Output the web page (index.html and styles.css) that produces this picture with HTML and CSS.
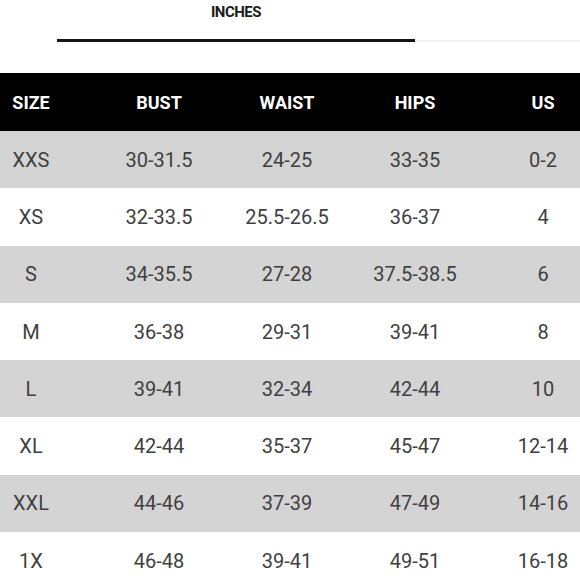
FILE: index.html
```html
<!DOCTYPE html>
<html lang="en">
<head>
<meta charset="utf-8">
<title>Size chart</title>
<link rel="stylesheet" href="styles.css">
</head>
<body>
<div class="page">
  <div class="tabs">
    <div class="tab active">INCHES</div>
    <div class="tab-rest"></div>
  </div>
  <div class="table-wrap">
    <table class="chart">
      <colgroup>
        <col class="c-size"><col class="c-m"><col class="c-m"><col class="c-m"><col class="c-m">
      </colgroup>
      <thead>
        <tr><th>SIZE</th><th>BUST</th><th>WAIST</th><th>HIPS</th><th>US</th></tr>
      </thead>
      <tbody>
        <tr class="alt"><td>XXS</td><td>30-31.5</td><td>24-25</td><td>33-35</td><td>0-2</td></tr>
        <tr><td>XS</td><td>32-33.5</td><td>25.5-26.5</td><td>36-37</td><td>4</td></tr>
        <tr class="alt"><td>S</td><td>34-35.5</td><td>27-28</td><td>37.5-38.5</td><td>6</td></tr>
        <tr><td>M</td><td>36-38</td><td>29-31</td><td>39-41</td><td>8</td></tr>
        <tr class="alt"><td>L</td><td>39-41</td><td>32-34</td><td>42-44</td><td>10</td></tr>
        <tr><td>XL</td><td>42-44</td><td>35-37</td><td>45-47</td><td>12-14</td></tr>
        <tr class="alt"><td>XXL</td><td>44-46</td><td>37-39</td><td>47-49</td><td>14-16</td></tr>
        <tr><td>1X</td><td>46-48</td><td>39-41</td><td>49-51</td><td>16-18</td></tr>
      </tbody>
    </table>
  </div>
</div>
</body>
</html>
```

FILE: styles.css
```css
html, body {
  margin: 0;
  padding: 0;
  background: #ffffff;
}

body {
  width: 580px;
  height: 580px;
  overflow: hidden;
  font-family: Roboto, "Liberation Sans", Arial, sans-serif;
}

.page {
  width: 580px;
  overflow: hidden;
}

.tabs {
  display: flex;
  align-items: flex-end;
  padding-left: 57px;
  margin-bottom: 31px;
}

.tab {
  width: 358px;
  text-align: center;
  font-size: 15px;
  line-height: 18px;
  font-weight: 700;
  letter-spacing: -0.5px;
  color: #1a1a1a;
  padding-top: 3px;
  padding-bottom: 18px;
}

.tab.active {
  border-bottom: 3px solid #141414;
}

.tab-rest {
  flex: 1;
  border-bottom: 2px solid #f1f1f1;
  margin-bottom: 0;
}

.table-wrap {
  width: 580px;
  overflow: hidden;
}

.chart {
  width: 607px;
  table-layout: fixed;
  border-collapse: collapse;
  border-spacing: 0;
}

.c-size { width: 95px; }
.c-m { width: 128px; }

.chart th,
.chart td {
  padding: 0;
  text-align: center;
  vertical-align: middle;
  white-space: nowrap;
}

.chart th:first-child,
.chart td:first-child {
  padding-right: 33px;
}

.chart thead tr {
  background: #000000;
  height: 58px;
}

.chart th {
  color: #ffffff;
  font-size: 18px;
  font-weight: 700;
}

.chart tbody tr {
  height: 57.3px;
  background: #ffffff;
}

.chart tbody tr.alt {
  background: #d4d4d4;
}

.chart td {
  color: #404040;
  font-size: 20px;
  font-weight: 400;
}
```
